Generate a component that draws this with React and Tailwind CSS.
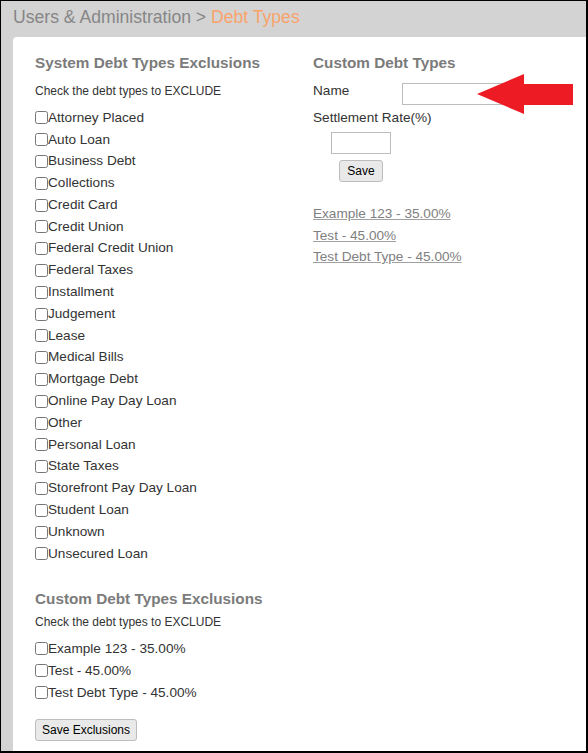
import React from 'react'

const systemTypes = [
  'Attorney Placed',
  'Auto Loan',
  'Business Debt',
  'Collections',
  'Credit Card',
  'Credit Union',
  'Federal Credit Union',
  'Federal Taxes',
  'Installment',
  'Judgement',
  'Lease',
  'Medical Bills',
  'Mortgage Debt',
  'Online Pay Day Loan',
  'Other',
  'Personal Loan',
  'State Taxes',
  'Storefront Pay Day Loan',
  'Student Loan',
  'Unknown',
  'Unsecured Loan',
]

const customTypes = ['Example 123 - 35.00%', 'Test - 45.00%', 'Test Debt Type - 45.00%']

const CheckRow = ({ label, rowClass }) => (
  <label className={`flex items-center text-[13.6px] text-[#333] ${rowClass}`}>
    <input type="checkbox" className="m-0 w-[13px] h-[13px] shrink-0" />
    <span>{label}</span>
  </label>
)

const Arrow = () => (
  <svg
    className="absolute left-[164px] top-[-9px]"
    width="97"
    height="41"
    viewBox="0 0 97 41"
  >
    <polygon points="0,20 47,0 47,10 96,10 96,31 47,31 47,40" fill="#ed1c24" />
  </svg>
)

export default function App() {
  return (
    <div
      className="w-[588px] h-[753px] overflow-hidden bg-[#d3d3d3] border-l border-t border-r-2 border-b-2 border-black"
      style={{ fontFamily: '"Liberation Sans", Arial, sans-serif' }}
    >
      <div className="pl-[12px] h-[36px] pt-[5px] text-[17.6px] leading-[22px] text-[#868686]">
        Users &amp; Administration &gt; <span className="text-[#f9a36b]">Debt Types</span>
      </div>

      <div className="ml-[12px] bg-white rounded-tl-[4px] h-[720px] pl-[22px] pt-[17px]">
        <div className="flex">
          {/* left column */}
          <div className="w-[278px]">
            <h2 className="text-[15.3px] leading-[18px] font-bold text-[#7b7b7b]">
              System Debt Types Exclusions
            </h2>
            <p className="mt-[12px] text-[12px] leading-[14px] text-[#333]">
              Check the debt types to EXCLUDE
            </p>
            <div className="mt-[9px]">
              {systemTypes.map((t) => (
                <CheckRow key={t} label={t} rowClass="h-[21.8px]" />
              ))}
            </div>
          </div>

          {/* right column */}
          <div className="flex-1">
            <h2 className="text-[15.3px] leading-[18px] font-bold text-[#7b7b7b]">
              Custom Debt Types
            </h2>
            <div className="mt-[11px] flex items-start relative">
              <span className="w-[89px] text-[13.6px] leading-[16px] text-[#333]">Name</span>
              <input
                type="text"
                className="w-[120px] h-[22px] border border-[#bcbcbc] bg-white"
              />
              <Arrow />
            </div>
            <div className="mt-[5px] text-[13.6px] leading-[16px] text-[#333]">Settlement Rate(%)</div>
            <div className="ml-[18px] mt-[6px] w-[60px] flex flex-col items-center">
              <input type="text" className="w-[60px] h-[22px] border border-[#bcbcbc] bg-white" />
              <button className="mt-[6px] h-[22px] px-[7px] text-[12px] text-black bg-[#e9e9e9] border border-[#bdbdbd] rounded-[3px]">
                Save
              </button>
            </div>
            <div className="mt-[22px]">
              {customTypes.map((t) => (
                <div key={t} className="h-[21.5px] text-[13.6px] text-[#808080] underline decoration-[#a0a0a0]">
                  {t}
                </div>
              ))}
            </div>
          </div>
        </div>

        <h2 className="mt-[25px] text-[15.3px] leading-[18px] font-bold text-[#7b7b7b]">
          Custom Debt Types Exclusions
        </h2>
        <p className="mt-[7px] text-[12px] leading-[14px] text-[#333]">
          Check the debt types to EXCLUDE
        </p>
        <div className="mt-[9px]">
          {customTypes.map((t) => (
            <CheckRow key={t} label={t} rowClass="h-[22px]" />
          ))}
        </div>
        <button className="mt-[15px] h-[22px] px-[6px] text-[12px] text-black bg-[#e9e9e9] border border-[#bdbdbd] rounded-[3px]">
          Save Exclusions
        </button>
      </div>
    </div>
  )
}
